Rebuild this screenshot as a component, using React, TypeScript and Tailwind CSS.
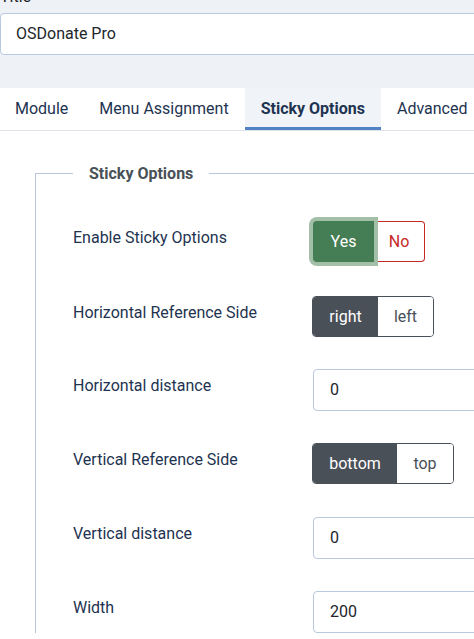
import React from "react";

const font = { fontFamily: "Roboto, 'Noto Sans', sans-serif" };

function Label({ children }: { children: React.ReactNode }) {
  return (
    <div className="w-[240px] shrink-0 pt-[5px] text-[16px] leading-6 text-[#1e3350]">
      {children}
    </div>
  );
}

function Row({ label, children, className = "" }: { label: string; children: React.ReactNode; className?: string }) {
  return (
    <div className={"flex items-start " + className}>
      <Label>{label}</Label>
      {children}
    </div>
  );
}

function TextInput({ value }: { value: string }) {
  return (
    <div className="h-[42px] w-[300px] shrink-0 rounded-[4px] border border-[#b8c8e0] bg-white pl-4 flex items-center text-[16px] text-[#22262a]">
      {value}
    </div>
  );
}

function Segment({ active, other, activeW, otherW }: { active: string; other: string; activeW: string; otherW: string }) {
  return (
    <div className="-ml-px flex h-[41px] shrink-0 overflow-hidden rounded-[4px] border border-[#4a5058] text-[16px]">
      <div className={"flex items-center justify-center bg-[#4a5058] text-white " + activeW}>{active}</div>
      <div className={"flex items-center justify-center bg-white text-[#4a5058] " + otherW}>{other}</div>
    </div>
  );
}

export default function App() {
  return (
    <div className="w-[474px] h-[639px] overflow-hidden bg-[#eef1f6]" style={font}>
      <div className="-mt-[15px] h-6 text-[16px] leading-6 text-[#22262a]">Title</div>
      <div className="mt-1 h-[42px] w-[600px] rounded-[4px] border border-[#b8c8e0] bg-white pl-[15px] flex items-center text-[16px] text-[#22262a]">
        OSDonate Pro
      </div>
      <div className="h-[33px]" />
      <div className="bg-white">
        <div className="flex h-[43px] border-b border-[#dfe4ea] text-[16px] text-[#1e3350] whitespace-nowrap">
          <div className="flex items-center pl-[15px] pr-[15px]">Module</div>
          <div className="flex items-center px-4">Menu Assignment</div>
          <div className="flex items-center px-4 bg-[#f0f4f9] font-bold border-b-[3px] border-[#5282c4] pt-[3px]">Sticky Options</div>
          <div className="flex items-center px-4">Advanced</div>
        </div>
        <div className="pl-[35px] pt-[42px] h-[600px]">
          <div className="relative w-[600px] border-l border-t border-[#b8c6da] pl-[37px] pt-[47px]">
            <div className="absolute left-[37px] -top-[12px] bg-white px-4 text-[16px] leading-6 font-bold text-[#495057]">
              Sticky Options
            </div>
            <Row label="Enable Sticky Options">
              <div className="flex h-[41px] shrink-0 text-[16px]">
                <div className="flex w-[61px] items-center justify-center rounded-l-[4px] bg-[#457d54] text-white shadow-[0_0_0_4px_#a3bfa7] relative z-10">
                  Yes
                </div>
                <div className="flex w-[51px] items-center justify-center rounded-r-[4px] border border-l-0 border-[#c52827] bg-white text-[#c52827]">
                  No
                </div>
              </div>
            </Row>
            <Row label="Horizontal Reference Side" className="mt-[34px]">
              <Segment active="right" other="left" activeW="w-[65px]" otherW="w-[55px]" />
            </Row>
            <Row label="Horizontal distance" className="mt-[32px]">
              <TextInput value="0" />
            </Row>
            <Row label="Vertical Reference Side" className="mt-[32px]">
              <Segment active="bottom" other="top" activeW="w-[84px]" otherW="w-[56px]" />
            </Row>
            <Row label="Vertical distance" className="mt-[33px]">
              <TextInput value="0" />
            </Row>
            <Row label="Width" className="mt-[32px]">
              <TextInput value="200" />
            </Row>
          </div>
        </div>
      </div>
    </div>
  );
}
